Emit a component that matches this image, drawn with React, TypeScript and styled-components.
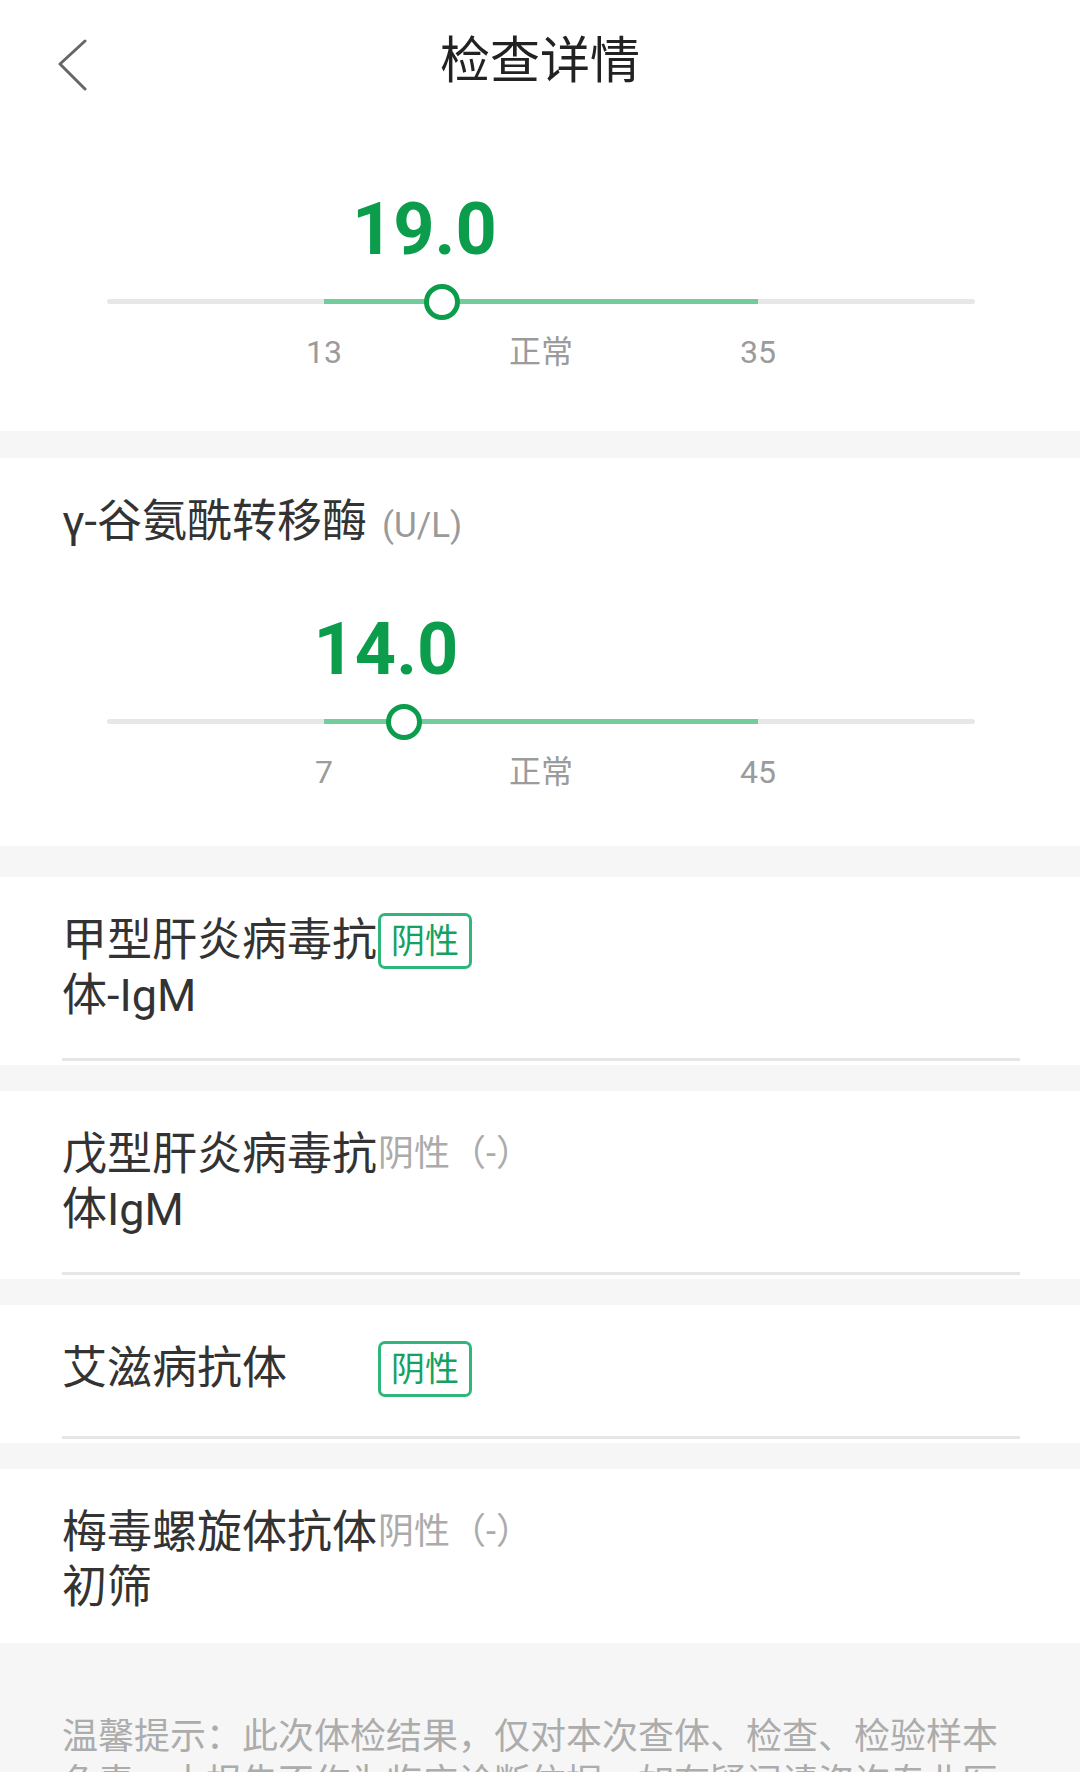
import React from "react";
import styled, { createGlobalStyle } from "styled-components";

const GlobalStyle = createGlobalStyle`
  html, body {
    margin: 0;
    padding: 0;
    background: #f6f6f6;
    font-family: Roboto, "Noto Sans CJK SC", sans-serif;
    color: #333;
  }
  * { box-sizing: border-box; }
`;

const Page = styled.div`
  width: 1080px;
  display: flex;
  flex-direction: column;
`;

const Header = styled.header`
  height: 122px;
  background: #fff;
  display: grid;
  grid-template-columns: 1fr auto 1fr;
  align-items: center;
  padding: 0 58px;
`;

const BackButton = styled.button`
  justify-self: start;
  width: 32px;
  height: 56px;
  padding: 0;
  border: none;
  background: transparent;
  display: flex;
  align-items: center;
  margin-top: 8px;
`;

const Title = styled.h1`
  margin: 0;
  font-size: 50px;
  font-weight: 400;
  color: #222;
  line-height: 1;
`;

const Card = styled.section<{ $pt: number; $pb: number; $gap: number }>`
  background: #fff;
  padding: ${(p) => p.$pt}px 0 ${(p) => p.$pb}px;
  margin-bottom: ${(p) => p.$gap}px;
`;

const MetricTitle = styled.div`
  padding: 0 62px;
  font-size: 45px;
  line-height: 57px;
  color: #333;
  display: flex;
  align-items: baseline;
`;

const Unit = styled.span`
  font-size: 35px;
  color: #9a9a9a;
  margin-left: 15px;
`;

const GaugeWrap = styled.div<{ $mt: number }>`
  margin-top: ${(p) => p.$mt}px;
  padding: 0 105px 0 107px;
  display: flex;
  flex-direction: column;
`;

const ValueRow = styled.div`
  position: relative;
  height: 72px;
`;

const Value = styled.div`
  position: absolute;
  top: 0;
  transform: translateX(calc(-50% - 18px));
  font-family: Roboto, "Noto Sans CJK SC", sans-serif;
  font-size: 72px;
  font-weight: 700;
  line-height: 72px;
  color: #0b9d4b;
  white-space: nowrap;
`;

const Track = styled.div`
  position: relative;
  height: 36px;
  margin-top: 18px;
`;

const TrackLine = styled.div`
  position: absolute;
  left: 0;
  right: 0;
  top: 15px;
  height: 5px;
  border-radius: 3px;
  background: #e7e7e7;
`;

const NormalRange = styled.div`
  position: absolute;
  left: 25%;
  width: 50%;
  top: 15px;
  height: 5px;
  background: #74cc9d;
`;

const Thumb = styled.div`
  position: absolute;
  top: 0;
  width: 36px;
  height: 36px;
  margin-left: -18px;
  border-radius: 50%;
  border: 5px solid #0b9d4b;
  background: #fff;
`;

const Labels = styled.div`
  margin-top: 12px;
  display: grid;
  grid-template-columns: 1fr 2fr 2fr 2fr 1fr;
`;

const Label = styled.span<{ $col: number }>`
  grid-column: ${(p) => p.$col};
  text-align: center;
  font-size: 32px;
  line-height: 40px;
  color: #9b9b9b;
`;

type GaugeProps = {
  value: number;
  min: number;
  max: number;
  mt: number;
};

function Gauge({ value, min, max, mt }: GaugeProps) {
  const pct = 25 + ((value - min) / (max - min)) * 50;
  return (
    <GaugeWrap $mt={mt}>
      <ValueRow>
        <Value style={{ left: `${pct}%` }}>{value.toFixed(1)}</Value>
      </ValueRow>
      <Track>
        <TrackLine />
        <NormalRange />
        <Thumb style={{ left: `${pct}%` }} />
      </Track>
      <Labels>
        <Label $col={2}>{min}</Label>
        <Label $col={3}>正常</Label>
        <Label $col={4}>{max}</Label>
      </Labels>
    </GaugeWrap>
  );
}

const ItemCard = styled.section<{ $last?: boolean }>`
  background: #fff;
  padding: 36px 0 ${(p) => (p.$last ? 28 : 0)}px;
  margin-bottom: ${(p) => (p.$last ? 0 : 26)}px;
`;

const ItemRow = styled.div`
  padding: 0 62px;
  min-height: 60px;
  display: flex;
  align-items: flex-start;
`;

const ItemName = styled.div`
  width: 316px;
  flex: none;
  font-size: 45px;
  line-height: 55px;
  color: #333;
`;

const Badge = styled.span`
  height: 56px;
  padding: 0 10px;
  border: 3px solid #2fb67b;
  border-radius: 7px;
  font-size: 34px;
  line-height: 50px;
  color: #14a162;
`;

const PlainResult = styled.span`
  font-size: 36px;
  line-height: 55px;
  color: #ababab;
`;

const Divider = styled.hr`
  margin: 35px 60px 4px 62px;
  border: none;
  height: 3px;
  background: #e6e6e6;
`;

const Footer = styled.footer`
  background: #f6f6f6;
  padding: 71px 62px 40px;
  font-size: 36px;
  line-height: 46px;
  color: #acacac;
`;

type Item = { name: string; result: string; tagged: boolean };

const items: Item[] = [
  { name: "甲型肝炎病毒抗体-IgM", result: "阴性", tagged: true },
  { name: "戊型肝炎病毒抗体IgM", result: "阴性（-）", tagged: false },
  { name: "艾滋病抗体", result: "阴性", tagged: true },
  { name: "梅毒螺旋体抗体初筛", result: "阴性（-）", tagged: false },
];

export default function App() {
  return (
    <Page>
      <GlobalStyle />
      <Header>
        <BackButton aria-label="返回">
          <svg width="32" height="56" viewBox="0 0 32 56" fill="none">
            <polyline
              points="27,4 2,27 27,52"
              stroke="#666"
              strokeWidth="3"
              strokeLinecap="round"
              strokeLinejoin="round"
            />
          </svg>
        </BackButton>
        <Title>检查详情</Title>
        <span />
      </Header>

      <Card $pt={72} $pb={59} $gap={27}>
        <Gauge value={19.0} min={13} max={35} mt={0} />
      </Card>

      <Card $pt={35} $pb={54} $gap={31}>
        <MetricTitle>
          γ-谷氨酰转移酶<Unit>(U/L)</Unit>
        </MetricTitle>
        <Gauge value={14.0} min={7} max={45} mt={60} />
      </Card>

      {items.map((it, i) => {
        const last = i === items.length - 1;
        return (
          <ItemCard key={it.name} $last={last}>
            <ItemRow>
              <ItemName>{it.name}</ItemName>
              {it.tagged ? <Badge>{it.result}</Badge> : <PlainResult>{it.result}</PlainResult>}
            </ItemRow>
            {!last && <Divider />}
          </ItemCard>
        );
      })}

      <Footer>
        温馨提示：此次体检结果，仅对本次查体、检查、检验样本负责，本报告不作为临床诊断依据，如有疑问请咨询专业医生。
      </Footer>
    </Page>
  );
}
